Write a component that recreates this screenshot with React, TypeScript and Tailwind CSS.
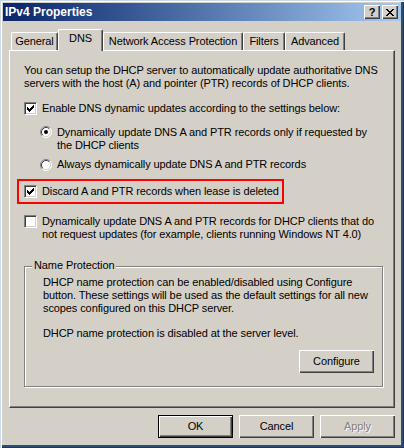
import clsx from 'clsx';
import type { ReactNode } from 'react';

const bevel =
  'shadow-[inset_1px_1px_0_#fff,inset_-1px_-1px_0_#404040,inset_-2px_-2px_0_#808080]';

const CheckMark = () => (
  <svg width="7" height="7" viewBox="0 0 7 7" shapeRendering="crispEdges">
    {[2, 3, 4, 3, 2, 1, 0].map((row, col) => (
      <rect key={col} x={col} y={row} width="1" height="3" fill="#000" />
    ))}
  </svg>
);

const CheckBox = ({ checked }: { checked?: boolean }) => (
  <span className="flex h-[13px] w-[13px] shrink-0 items-center justify-center border border-t-[#808080] border-l-[#808080] border-r-white border-b-white bg-white shadow-[inset_1px_1px_0_#404040,inset_-1px_-1px_0_#d4d0c8]">
    {checked && <CheckMark />}
  </span>
);

const Radio = ({ checked }: { checked?: boolean }) => (
  <svg width="12" height="12" viewBox="0 0 12 12" className="shrink-0">
    <circle cx="6" cy="6" r="5" fill="#fff" />
    <path d="M2.11 9.89 A5.5 5.5 0 0 1 9.89 2.11" fill="none" stroke="#808080" />
    <path d="M9.89 2.11 A5.5 5.5 0 0 1 2.11 9.89" fill="none" stroke="#fff" />
    <path d="M2.82 9.18 A4.5 4.5 0 0 1 9.18 2.82" fill="none" stroke="#404040" />
    <path d="M9.18 2.82 A4.5 4.5 0 0 1 2.82 9.18" fill="none" stroke="#d4d0c8" />
    {checked && <circle cx="6" cy="6" r="2" fill="#000" />}
  </svg>
);

const CloseGlyph = () => {
  // classic 8x7 pixel "x"
  const rows = ['XX....XX', '.XX..XX.', '..XXXX..', '...XX...', '..XXXX..', '.XX..XX.', 'XX....XX'];
  return (
    <svg width="8" height="7" viewBox="0 0 8 7" shapeRendering="crispEdges">
      {rows.flatMap((r, y) =>
        r.split('').map((c, x) => (c === 'X' ? <rect key={`${x}-${y}`} x={x} y={y} width="1" height="1" fill="#000" /> : null))
      )}
    </svg>
  );
};

const CaptionButton = ({ children }: { children: ReactNode }) => (
  <div className={clsx('flex h-[14px] w-[16px] items-center justify-center bg-[#d4d0c8]', bevel)}>{children}</div>
);

const Tab = ({ label, active, className }: { label: string; active?: boolean; className: string }) => (
  <div
    className={clsx(
      'flex shrink-0 items-start justify-center rounded-t-[2px] border-t border-l border-r border-t-white border-l-white border-r-[#404040] bg-[#d4d0c8] pt-[2px] shadow-[inset_-1px_0_0_#808080]',
      active ? 'relative z-10 -mb-[1px] h-[22px]' : 'h-[18px]',
      className
    )}
  >
    {label}
  </div>
);

const Button = ({ children, isDefault, disabled }: { children: ReactNode; isDefault?: boolean; disabled?: boolean }) => (
  <button
    type="button"
    className={clsx(
      'flex h-[23px] w-[75px] items-center justify-center bg-[#d4d0c8]',
      bevel,
      isDefault && 'border border-black',
      disabled && 'text-[#808080] [text-shadow:1px_1px_0_#fff]'
    )}
  >
    {children}
  </button>
);

export default function App() {
  return (
    <div className="flex h-[448px] w-[404px] flex-col bg-[#d4d0c8] p-[3px] font-['Liberation_Sans',Arial,sans-serif] text-[11px] leading-[13px] tracking-[-0.1px] text-black shadow-[inset_1px_1px_0_#c9d9ea,inset_2px_2px_0_#fff,inset_-1px_-1px_0_#1f3b5c,inset_-3px_-3px_0_#2e4f74]">
      {/* Title bar */}
      <div className="flex h-[18px] items-center justify-between bg-linear-to-r from-[#0a246a] to-[#a6caf0] pl-[2px] pr-[3px]">
        <span className="text-[12px] font-bold tracking-normal text-white">IPv4 Properties</span>
        <div className="flex gap-[2px]">
          <CaptionButton>
            <span className="text-[11px] font-bold leading-none">?</span>
          </CaptionButton>
          <CaptionButton>
            <CloseGlyph />
          </CaptionButton>
        </div>
      </div>

      <div className="flex flex-col px-[6px]">
        {/* Tabs */}
        <div className="mt-[8px] flex h-[21px] items-end pl-[2px]">
          <Tab label="General" className="w-[47px]" />
          <Tab label="DNS" active className="w-[45px]" />
          <Tab label="Network Access Protection" className="w-[140px]" />
          <Tab label="Filters" className="w-[42px]" />
          <Tab label="Advanced" className="w-[60px]" />
        </div>

        {/* Tab panel */}
        <div className="flex h-[358px] flex-col border border-t-white border-l-white border-r-[#404040] border-b-[#404040] pl-[14px] pt-[13px] shadow-[inset_-1px_-1px_0_#808080]">
          <p className="whitespace-nowrap">
            You can setup the DHCP server to automatically update authoritative DNS
            <br />
            servers with the host (A) and pointer (PTR) records of DHCP clients.
          </p>

          <div className="mt-[12px] flex items-center gap-[5px]">
            <CheckBox checked />
            <span>Enable DNS dynamic updates according to the settings below:</span>
          </div>

          <div className="mt-[11px] ml-[16px] flex items-start gap-[5px]">
            <Radio checked />
            <span className="whitespace-nowrap">
              Dynamically update DNS A and PTR records only if requested by
              <br />
              the DHCP clients
            </span>
          </div>

          <div className="mt-[6px] ml-[16px] flex items-center gap-[5px]">
            <Radio />
            <span>Always dynamically update DNS A and PTR records</span>
          </div>

          {/* Highlighted option */}
          <div className="mt-[8px] -ml-[7px] flex h-[25px] w-[267px] items-center gap-[5px] border-2 border-[#ff0000] pl-[5px]">
            <CheckBox checked />
            <span className="whitespace-nowrap">Discard A and PTR records when lease is deleted</span>
          </div>

          <div className="mt-[11px] flex items-start gap-[5px]">
            <CheckBox />
            <span className="whitespace-nowrap">
              Dynamically update DNS A and PTR records for DHCP clients that do
              <br />
              not request updates (for example, clients running Windows NT 4.0)
            </span>
          </div>

          {/* Name Protection group */}
          <div className="relative mt-[25px] w-[359px] border border-[#808080] pt-[9px] pr-[8px] pb-[13px] pl-[18px] shadow-[1px_1px_0_#fff,inset_1px_1px_0_#fff]">
            <span className="absolute -top-[8px] left-[7px] bg-[#d4d0c8] px-[2px]">Name Protection</span>
            <p className="whitespace-nowrap">
              DHCP name protection can be enabled/disabled using Configure
              <br />
              button. These settings will be used as the default settings for all new
              <br />
              scopes configured on this DHCP server.
            </p>
            <p className="mt-[12px]">DHCP name protection is disabled at the server level.</p>
            <div className="mt-[10px] flex justify-end">
              <Button>Configure</Button>
            </div>
          </div>
        </div>

        {/* Dialog buttons */}
        <div className="mt-[7px] flex justify-end gap-[6px]">
          <Button isDefault>OK</Button>
          <Button>Cancel</Button>
          <Button disabled>Apply</Button>
        </div>
      </div>
    </div>
  );
}
